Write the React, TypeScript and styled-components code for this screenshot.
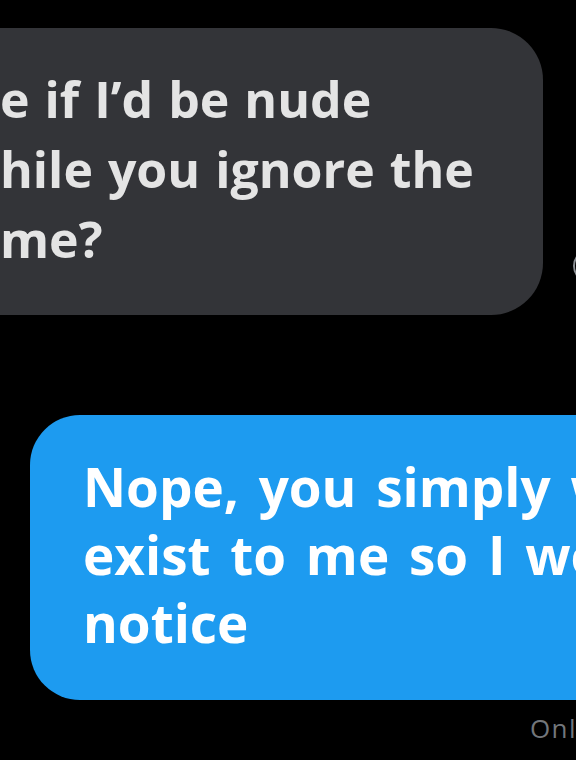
import styled, { createGlobalStyle } from 'styled-components';

const GlobalStyle = createGlobalStyle`
  html, body {
    margin: 0;
    padding: 0;
    background: #000;
    overflow: hidden;
  }
`;

const Thread = styled.main`
  width: 576px;
  height: 760px;
  display: flex;
  flex-direction: column;
  padding-top: 28px;
  box-sizing: border-box;
  overflow: hidden;
  font-family: 'Open Sans', 'Liberation Sans', sans-serif;
  font-weight: 700;
  font-variant-ligatures: none;
`;

const Row = styled.div`
  display: flex;
  align-items: flex-end;
  gap: 30px;
`;

const Bubble = styled.div<{ $mine?: boolean }>`
  flex: none;
  box-sizing: border-box;
  white-space: nowrap;
  ${({ $mine }) =>
    $mine
      ? `
    margin-left: 30px;
    width: 640px;
    padding: 38px 0 43px 53px;
    background: #1d9bf0;
    color: #fff;
    font-size: 53px;
    word-spacing: 6px;
    line-height: 68px;
    border-radius: 50px;
  `
      : `
    margin-left: -80px;
    width: 623px;
    padding: 36px 0 41px 80px;
    background: #333438;
    color: #e4e4e4;
    font-size: 50px;
    word-spacing: 2px;
    line-height: 70px;
    border-radius: 52px;
  `}
`;

const Line = styled.div``;

const ReactButton = styled.span`
  flex: none;
  width: 30px;
  height: 30px;
  margin-bottom: 32px;
  border: 2px solid #8b8f94;
  border-radius: 50%;
`;

const Gap = styled.div`
  height: 100px;
`;

const Meta = styled.div`
  margin-top: 10px;
  padding-left: 530px;
  white-space: nowrap;
  font-family: 'Open Sans', 'Liberation Sans', sans-serif;
  font-weight: 400;
  font-size: 26px;
  letter-spacing: 1.4px;
  color: #72767b;
`;

export default function App() {
  return (
    <>
      <GlobalStyle />
      <Thread>
        <Row>
          <Bubble>
            <Line>e if I’d be nude</Line>
            <Line>hile you ignore the</Line>
            <Line>me?</Line>
          </Bubble>
          <ReactButton />
        </Row>
        <Gap />
        <Row>
          <Bubble $mine>
            <Line>Nope, you simply wouldn’t</Line>
            <Line>exist to me so I wouldn’t</Line>
            <Line>notice</Line>
          </Bubble>
        </Row>
        <Meta>Only you</Meta>
      </Thread>
    </>
  );
}
